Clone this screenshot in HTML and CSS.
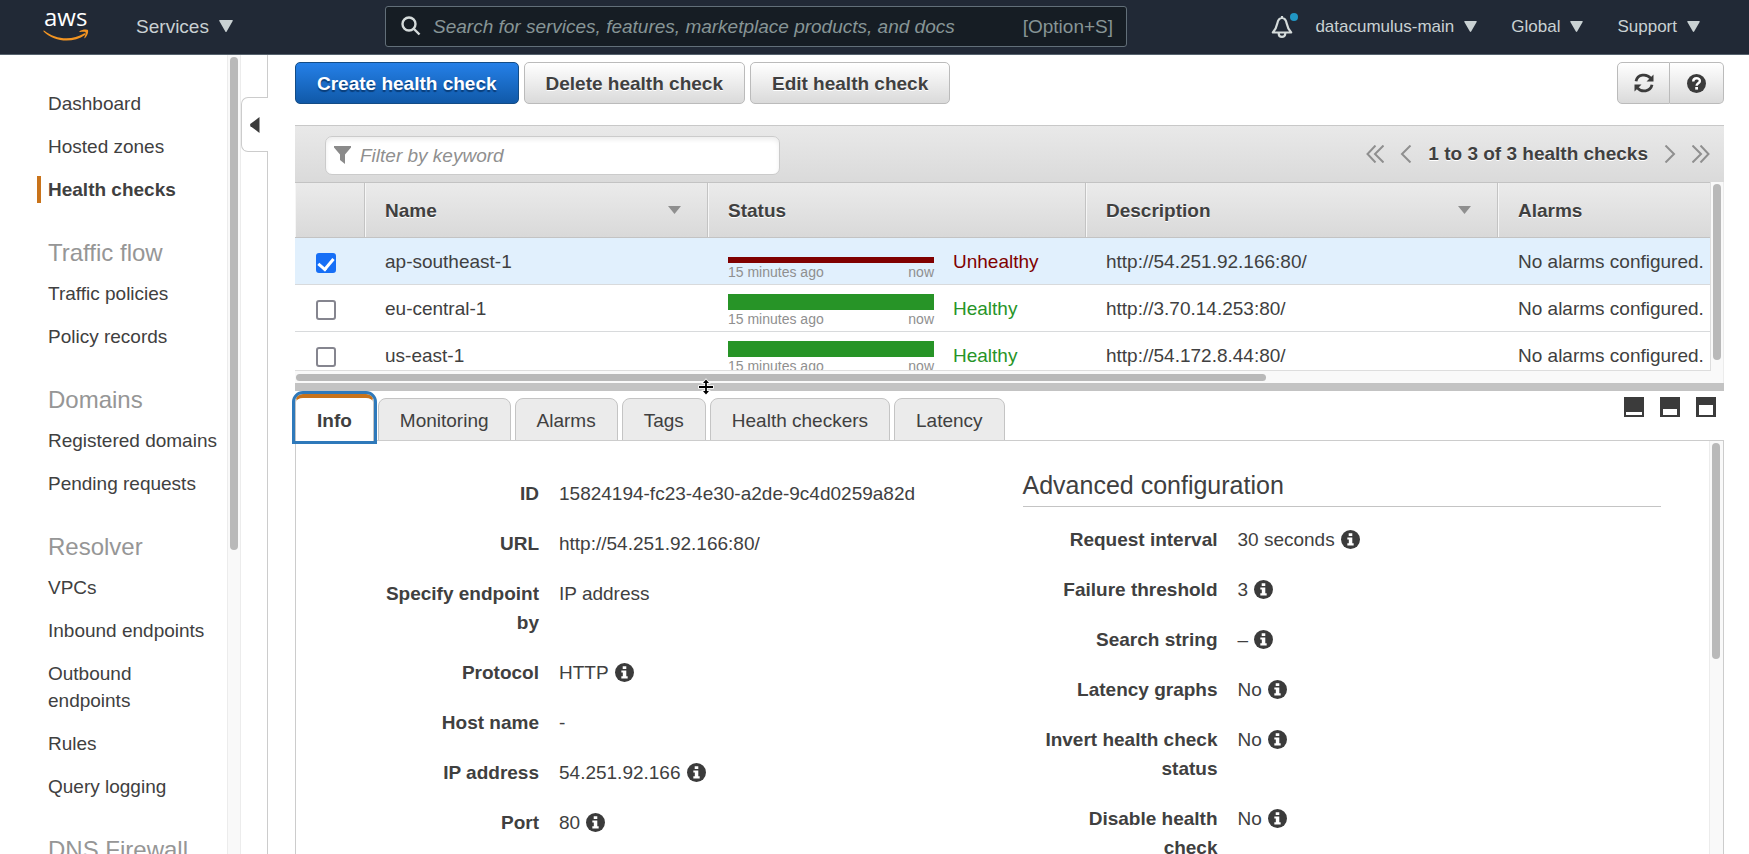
FILE: index.html
```html
<!DOCTYPE html>
<html lang="en">
<head>
<meta charset="utf-8">
<title>Route 53 Health checks</title>
<link rel="stylesheet" href="styles.css">
</head>
<body>
<svg class="sprite" aria-hidden="true">
  <symbol id="info" viewBox="0 0 18 18"><circle cx="9" cy="9" r="9" fill="#3b3b3b"/><path d="M7.300 3h3.400v2.700H7.300zM6 7h4.700v5.600H12v2H6v-2h1.400V9H6z" fill="#fff"/></symbol>
  <symbol id="down" viewBox="0 0 14 12"><path d="M.8 0h12.400q1.100 0 .5 1L7.700 11.400q-.7 1-1.400 0L.3 1Q-.3 0 .8 0z" fill="currentColor"/></symbol>
</svg>

<header class="topbar">
  <a class="logo" href="#" aria-label="aws home">
    <svg width="48" height="32" viewBox="0 0 48 32">
      <text x="1" y="16" class="logo-text">aws</text>
      <path d="M1 20.500C12 29.500 29 31 41 23.500c1.200-.8 2.300.4 1 1.400C30 33.500 11 32 .8 21.700c-.6-.7-.4-1.500.2-1.200z" fill="#f29422"/>
      <path d="M36.500 21.200c2.500-2 7.300-2.200 8.300-1.200 1 1-.3 6-2.700 8-.6.500-1 .2-.7-.5.700-1.700 1.700-4.500 1.100-5.200-.7-.8-3.700-.4-5.300-.2-.7 0-1.200-.5-.7-.9z" fill="#f29422"/>
    </svg>
  </a>
  <button class="nav services">Services <svg width="14" height="12"><use href="#down"/></svg></button>
  <label class="search">
    <svg width="20" height="20" viewBox="0 0 20 20" fill="none" stroke="#d5dbdb" stroke-width="2.400"><circle cx="8" cy="8" r="6.500"/><path d="M12.500 12.500l6 6"/></svg>
    <input type="text" aria-label="Search" placeholder="Search for services, features, marketplace products, and docs">
    <span>[Option+S]</span>
  </label>
  <nav class="account" aria-label="Account">
    <button class="bell" aria-label="Notifications">
      <svg width="28" height="28" viewBox="0 0 28 28"><path d="M12 6.500V4M12 6c-2.600 0-4 2-4.700 5.500-.7 3.800-2 6.200-4.500 9h18.400c-2.500-2.800-3.800-5.200-4.500-9C16 8 14.600 6 12 6zM8.700 21.500c0 4.600 6.600 4.600 6.600 0" fill="none" stroke="#d5dbdb" stroke-width="2.200" stroke-linejoin="round"/><circle cx="24" cy="5" r="4" fill="#2196c4"/></svg>
    </button>
    <button class="nav">datacumulus-main <svg width="13" height="11"><use href="#down"/></svg></button>
    <button class="nav">Global <svg width="13" height="11"><use href="#down"/></svg></button>
    <button class="nav">Support <svg width="13" height="11"><use href="#down"/></svg></button>
  </nav>
</header>

<div class="body">
  <nav class="sidebar" aria-label="Route 53">
    <ul>
      <li><a href="#">Dashboard</a></li>
      <li><a href="#">Hosted zones</a></li>
      <li class="current"><a href="#" aria-current="page">Health checks</a></li>
    </ul>
    <h2>Traffic flow</h2>
    <ul>
      <li><a href="#">Traffic policies</a></li>
      <li><a href="#">Policy records</a></li>
    </ul>
    <h2>Domains</h2>
    <ul>
      <li><a href="#">Registered domains</a></li>
      <li><a href="#">Pending requests</a></li>
    </ul>
    <h2>Resolver</h2>
    <ul>
      <li><a href="#">VPCs</a></li>
      <li><a href="#">Inbound endpoints</a></li>
      <li><a href="#">Outbound endpoints</a></li>
      <li><a href="#">Rules</a></li>
      <li><a href="#">Query logging</a></li>
    </ul>
    <h2>DNS Firewall</h2>
  </nav>
  <div class="vscroll side-scroll"><div class="thumb"></div></div>
  <div class="rail">
    <button class="collapse" aria-label="Collapse navigation"><svg width="10" height="16" viewBox="0 0 10 16"><path d="M9.500 0v16L.5 9.200q-.8-1.200 0-2.400z" fill="#3b3b3b"/></svg></button>
  </div>

  <main class="main">
    <div class="actions">
      <button class="btn primary">Create health check</button>
      <button class="btn">Delete health check</button>
      <button class="btn">Edit health check</button>
      <div class="group">
        <button class="btn" aria-label="Refresh">
          <svg width="20" height="20" viewBox="0 0 20 20" fill="none" stroke="#3b3b3b" stroke-width="2.800"><path d="M2 8.200C3.500 1.200 12.500.2 16.600 5.200M18 11.800c-1.500 7-10.500 8-14.600 3"/><path d="M19.500 1.500v7h-7zM.5 18.500v-7h7z" fill="#3b3b3b" stroke="none"/></svg>
        </button>
        <button class="btn" aria-label="Help">
          <svg width="19" height="19" viewBox="0 0 18 18"><circle cx="9" cy="9" r="9" fill="#3b3b3b"/><path d="M5.900 7C5.900 3 12.200 3.100 12.200 6.600c0 2.200-3.100 2.300-3.100 4.600" fill="none" stroke="#fff" stroke-width="2.300"/><path d="M7.800 12.300h2.600v2.500H7.800z" fill="#fff"/></svg>
        </button>
      </div>
    </div>

    <div class="toolbar">
      <label class="filter">
        <svg width="17" height="18" viewBox="0 0 17 18"><path d="M0 0h17v1.500L11 8.500V18l-5-4V8.500L0 1.500z" fill="#8a8a8a"/></svg>
        <input type="text" aria-label="Filter" placeholder="Filter by keyword">
      </label>
      <div class="pager">
        <button aria-label="First page"><svg width="18" height="18" viewBox="0 0 18 18"><path d="M9.500.5L1.500 9l8 8.500M17.500.5L9 9l8.500 8.500"/></svg></button>
        <button aria-label="Previous page"><svg width="12" height="18" viewBox="0 0 12 18"><path d="M10.500.5L2 9l8.500 8.500"/></svg></button>
        <span>1 to 3 of 3 health checks</span>
        <button aria-label="Next page"><svg width="12" height="18" viewBox="0 0 12 18"><path d="M1.500.5L10 9l-8.500 8.500"/></svg></button>
        <button aria-label="Last page"><svg width="18" height="18" viewBox="0 0 18 18"><path d="M.5.500L9 9 .5 17.500M8.500.500l8 8.500-8 8.500"/></svg></button>
      </div>
    </div>

    <div class="grid-area">
      <div class="grid-clip">
        <table class="checks">
          <colgroup><col class="c-check"><col class="c-name"><col class="c-status"><col class="c-desc"><col></colgroup>
          <thead>
            <tr>
              <th></th>
              <th><div class="th">Name <svg width="13" height="8" viewBox="0 0 13 8"><path d="M0 0h13L6.500 8z"/></svg></div></th>
              <th>Status</th>
              <th><div class="th">Description <svg width="13" height="8" viewBox="0 0 13 8"><path d="M0 0h13L6.500 8z"/></svg></div></th>
              <th>Alarms</th>
            </tr>
          </thead>
          <tbody>
            <tr class="selected">
              <td class="pick"><input type="checkbox" aria-label="Select ap-southeast-1" checked></td>
              <td>ap-southeast-1</td>
              <td><div class="status bad"><div class="history"><div class="track"><div class="bar"></div></div><div class="range"><span>15 minutes ago</span><span>now</span></div></div><span>Unhealthy</span></div></td>
              <td>http://54.251.92.166:80/</td>
              <td>No alarms configured.</td>
            </tr>
            <tr>
              <td class="pick"><input type="checkbox" aria-label="Select eu-central-1"></td>
              <td>eu-central-1</td>
              <td><div class="status"><div class="history"><div class="track"><div class="bar"></div></div><div class="range"><span>15 minutes ago</span><span>now</span></div></div><span>Healthy</span></div></td>
              <td>http://3.70.14.253:80/</td>
              <td>No alarms configured.</td>
            </tr>
            <tr>
              <td class="pick"><input type="checkbox" aria-label="Select us-east-1"></td>
              <td>us-east-1</td>
              <td><div class="status"><div class="history"><div class="track"><div class="bar"></div></div><div class="range"><span>15 minutes ago</span><span>now</span></div></div><span>Healthy</span></div></td>
              <td>http://54.172.8.44:80/</td>
              <td>No alarms configured.</td>
            </tr>
          </tbody>
        </table>
      </div>
      <div class="vscroll grid-scroll"><div class="thumb"></div></div>
      <div class="hscroll"><div class="thumb"></div></div>
    </div>

    <div class="splitter">
      <svg class="cursor" width="16" height="18" viewBox="0 0 16 18"><path d="M8 1.500l3 3.500H8.900v3.100H15v1.800H8.900V13H11l-3 3.500L5 13h2.100V9.900H1V8.100h6.100V5H5z" fill="#000" stroke="#fff" stroke-width="1.600" paint-order="stroke"/></svg>
    </div>

    <div class="tabstrip">
      <div class="tabs" role="tablist">
        <button class="tab active" role="tab" aria-selected="true">Info</button>
        <button class="tab" role="tab">Monitoring</button>
        <button class="tab" role="tab">Alarms</button>
        <button class="tab" role="tab">Tags</button>
        <button class="tab" role="tab">Health checkers</button>
        <button class="tab" role="tab">Latency</button>
      </div>
      <div class="layouts">
        <button aria-label="Small pane"><svg width="20" height="20"><path d="M0 0h20v20H0z" fill="#3b3b3b"/><path d="M2 15h16v3H2z" fill="#fff"/></svg></button>
        <button aria-label="Half pane"><svg width="20" height="20"><path d="M0 0h20v20H0z" fill="#3b3b3b"/><path d="M3 12h14v6H3z" fill="#fff"/></svg></button>
        <button aria-label="Full pane"><svg width="20" height="20"><path d="M0 0h20v20H0z" fill="#3b3b3b"/><path d="M3 8h14v10H3z" fill="#fff"/></svg></button>
      </div>
    </div>

    <section class="panel">
      <div class="details">
        <dl class="fields">
          <div><dt>ID</dt><dd>15824194-fc23-4e30-a2de-9c4d0259a82d</dd></div>
          <div><dt>URL</dt><dd>http://54.251.92.166:80/</dd></div>
          <div><dt>Specify endpoint by</dt><dd>IP address</dd></div>
          <div><dt>Protocol</dt><dd>HTTP <svg class="info"><use href="#info"/></svg></dd></div>
          <div><dt>Host name</dt><dd>-</dd></div>
          <div><dt>IP address</dt><dd>54.251.92.166 <svg class="info"><use href="#info"/></svg></dd></div>
          <div><dt>Port</dt><dd>80 <svg class="info"><use href="#info"/></svg></dd></div>
        </dl>
        <div>
          <h3>Advanced configuration</h3>
          <dl class="fields">
            <div><dt>Request interval</dt><dd>30 seconds <svg class="info"><use href="#info"/></svg></dd></div>
            <div><dt>Failure threshold</dt><dd>3 <svg class="info"><use href="#info"/></svg></dd></div>
            <div><dt>Search string</dt><dd>– <svg class="info"><use href="#info"/></svg></dd></div>
            <div><dt>Latency graphs</dt><dd>No <svg class="info"><use href="#info"/></svg></dd></div>
            <div><dt>Invert health check status</dt><dd>No <svg class="info"><use href="#info"/></svg></dd></div>
            <div><dt>Disable health check</dt><dd>No <svg class="info"><use href="#info"/></svg></dd></div>
          </dl>
        </div>
      </div>
      <div class="vscroll panel-scroll"><div class="thumb"></div></div>
    </section>
  </main>
</div>
</body>
</html>
```
FILE: styles.css
```css
* { box-sizing: border-box; }
body {
  margin: 0;
  height: 100vh;
  overflow: hidden;
  display: flex;
  flex-direction: column;
  font: 19px/29px "Liberation Sans", Arial, sans-serif;
  color: #404040;
  background: #fff;
}
button, input { font: inherit; color: inherit; }
button { border: 0; padding: 0; background: none; display: flex; align-items: center; justify-content: center; white-space: nowrap; }
svg { display: block; flex: none; }
.sprite { position: absolute; width: 0; height: 0; }
ul, dl, dd { margin: 0; padding: 0; list-style: none; }
a { color: inherit; text-decoration: none; }

/* Top bar */
.topbar {
  flex: none;
  display: flex;
  align-items: center;
  height: 55px;
  padding: 0 49px 2px 43px;
  background: #212936;
  border-bottom: 1px solid #56626d;
  color: #c9d1d3;
}
.logo { margin-right: 45px; }
.logo svg { overflow: visible; }
.logo-text { font: 24px "Open Sans", sans-serif; fill: #fff; }
.nav { gap: 10px; }
.services { width: 97px; margin-right: 152px; }
.search {
  display: flex;
  align-items: center;
  flex: 0 1 742px;
  height: 41px;
  padding: 0 13px 0 15px;
  border: 1px solid #626f79;
  border-radius: 3px;
  background: #161d24;
  color: #879596;
}
.search input { flex: 1; min-width: 0; margin-left: 12px; padding: 0; border: 0; background: none; outline: 0; }
.search input::placeholder { color: #879596; opacity: 1; font-style: italic; }
.account { display: flex; align-items: center; gap: 34px; margin-left: auto; font-size: 17px; }
.bell { margin-right: -17px; }

/* Body columns */
.body { flex: 1; min-height: 0; display: flex; }
.sidebar { flex: none; width: 227px; padding: 35px 9px 0 37px; overflow: hidden; line-height: 27px; }
.sidebar ul { display: flex; flex-direction: column; gap: 16px; }
.sidebar li { padding-left: 11px; }
.sidebar .current { position: relative; font-weight: bold; }
.sidebar .current::before { content: ""; position: absolute; left: 0; top: 0; bottom: 0; width: 4px; background: #c9731a; }
.sidebar h2 { margin: 33px 0 10px 11px; font-size: 24px; font-weight: normal; line-height: 34px; color: #969696; }

.vscroll { flex: none; width: 14px; background: #f9f9f9; border: solid #ececec; border-width: 0 1px; padding: 2px; }
.thumb { border-radius: 4px; background: #b9b9b9; }
.vscroll .thumb { width: 8px; }
.side-scroll .thumb { height: 62%; }

.rail { flex: none; position: relative; width: 27px; border-right: 1px solid #ccc; }
.collapse { position: absolute; left: 0; right: -1px; top: 42px; height: 55px; border: 1px solid #ccc; border-right: 0; border-radius: 7px 0 0 7px; background: #fff; }

.main { flex: 1; min-width: 0; display: flex; flex-direction: column; padding: 7px 25px 0 27px; }

/* Buttons */
.actions { display: flex; gap: 5px; margin-bottom: 21px; }
.btn {
  height: 42px;
  padding: 0 21px;
  border: 1px solid #bbb;
  border-radius: 5px;
  background: linear-gradient(#fff, #dadada);
  font-weight: bold;
  text-shadow: 0 1px 0 #fff;
}
.primary { border-color: #134c86; background: linear-gradient(#2580e8, #1059a8); color: #fff; text-shadow: 0 2px 1px #0a3d78; }
.group { display: flex; margin-left: auto; }
.group .btn { width: 53px; padding: 0; border-radius: 5px 0 0 5px; }
.group .btn + .btn { width: 54px; border-left: 0; border-radius: 0 5px 5px 0; }

/* Table */
.toolbar {
  display: flex;
  align-items: center;
  justify-content: space-between;
  height: 57px;
  padding: 2px 14px 0 30px;
  border-top: 1px solid #c8c8c8;
  background: linear-gradient(#e9e9e9, #dadada);
}
.filter {
  display: flex;
  align-items: center;
  flex: 0 1 455px;
  height: 39px;
  padding: 0 8px;
  gap: 9px;
  border: 1px solid #cbcbcb;
  border-radius: 7px;
  background: #fff;
  box-shadow: inset 0 3px 4px #eee;
}
.filter input { flex: 1; min-width: 0; padding: 0; border: 0; outline: 0; background: none; }
.filter input::placeholder { color: #8f8f8f; opacity: 1; font-style: italic; }
.pager { display: flex; align-items: center; gap: 16px; padding-bottom: 3px; font-weight: bold; text-shadow: 0 1px 0 #fff; }
.pager path { fill: none; stroke: #8f8f8f; stroke-width: 2; }

.grid-area { flex: none; display: grid; grid-template: 189px 12px / 1fr 14px; background: #f9f9f9; }
.grid-clip { overflow: hidden; background: #fff; border-bottom: 1px solid #ddd; }
.checks { width: 100%; table-layout: fixed; border-collapse: separate; border-spacing: 0; }
.c-check { width: 70px; }
.c-name { width: 343px; }
.c-status { width: 378px; }
.c-desc { width: 412px; }
.checks th {
  height: 56px;
  padding: 0 0 0 20px;
  border: solid #c3c3c3;
  border-width: 1px 1px 1px 0;
  box-shadow: inset 1px 0 #f6f6f6;
  background: linear-gradient(#ebebeb, #d9d9d9);
  text-align: left;
  text-shadow: 0 1px 0 #fff;
}
.checks th:last-child { border-right: 0; }
.th { display: flex; align-items: center; justify-content: space-between; padding-right: 26px; }
.th path { fill: #8f8f8f; }
.checks td { height: 47px; padding: 0 0 0 20px; border-bottom: 1px solid #d8dadc; white-space: nowrap; }
.selected td { background: #e1f0fd; }
.checks .pick { padding: 4px 0 0 21px; }
.pick input { appearance: none; display: block; width: 20px; height: 20px; margin: 0; border: 2px solid #85858f; border-radius: 3px; background: #fff; }
.pick input:checked { display: grid; place-items: center; border-color: #176ff6; background: #176ff6; }
.pick input:checked::after { content: ""; width: 7px; height: 12px; margin-bottom: 3px; border: solid #fff; border-width: 0 3px 3px 0; transform: rotate(40deg); }
.status { display: flex; align-items: center; gap: 19px; color: #279427; }
.history { width: 206px; padding-top: 6px; }
.track { display: flex; align-items: flex-end; height: 16px; }
.bar { width: 100%; height: 16px; background: #279427; }
.bad { color: #800000; }
.bad .bar { height: 6px; background: #800000; }
.range { display: flex; justify-content: space-between; font-size: 14px; line-height: 18px; color: #8f8f8f; }
.grid-scroll { border-left-color: #ddd; }
.grid-scroll .thumb { height: 176px; }
.hscroll { grid-column: 1 / 3; padding: 3px 1px; border-right: 1px solid #ececec; }
.hscroll .thumb { width: 68%; height: 7px; }

.splitter { flex: none; position: relative; height: 8px; background: #c3c3c3; }
.cursor { position: absolute; left: 28%; top: -5px; margin-left: 3px; }

/* Detail tabs */
.tabstrip { display: flex; justify-content: space-between; height: 49px; }
.tabs { display: flex; align-items: flex-end; gap: 4px; margin-bottom: -1px; }
.tab { height: 43px; padding: 1px 21px 0; border: 1px solid #c4c4c4; border-radius: 8px 8px 0 0; background: #ebebeb; }
.active {
  position: relative;
  height: 47px;
  border-top: 4px solid #c9731a;
  border-bottom: 0;
  background: #fff;
  font-weight: bold;
  outline: 3px solid #2f79ba;
}
.layouts { display: flex; align-items: flex-start; gap: 16px; padding: 6px 8px 0 0; }

.panel { flex: 1; min-height: 0; display: flex; overflow: hidden; border: 1px solid #ccc; border-bottom: 0; }
.details { flex: 1; display: grid; grid-template-columns: 1fr 1fr; gap: 40px; padding: 38px 48px 0; }
.fields { display: flex; flex-direction: column; gap: 21px; }
.fields > div { display: flex; gap: 20px; }
.fields dt { flex: none; width: 178px; margin-left: 17px; font-weight: bold; text-align: right; }
.fields dd { display: flex; align-items: center; gap: 6px; height: 29px; }
.info { width: 19px; height: 19px; }
.details h3 { margin: -12px 0 18px; padding: 0 0 3px; border-bottom: 1px solid #c4c4c4; font-size: 25px; line-height: 36px; font-weight: normal; }
.panel-scroll { border-right: 0; }
.panel-scroll .thumb { height: 216px; }
```
